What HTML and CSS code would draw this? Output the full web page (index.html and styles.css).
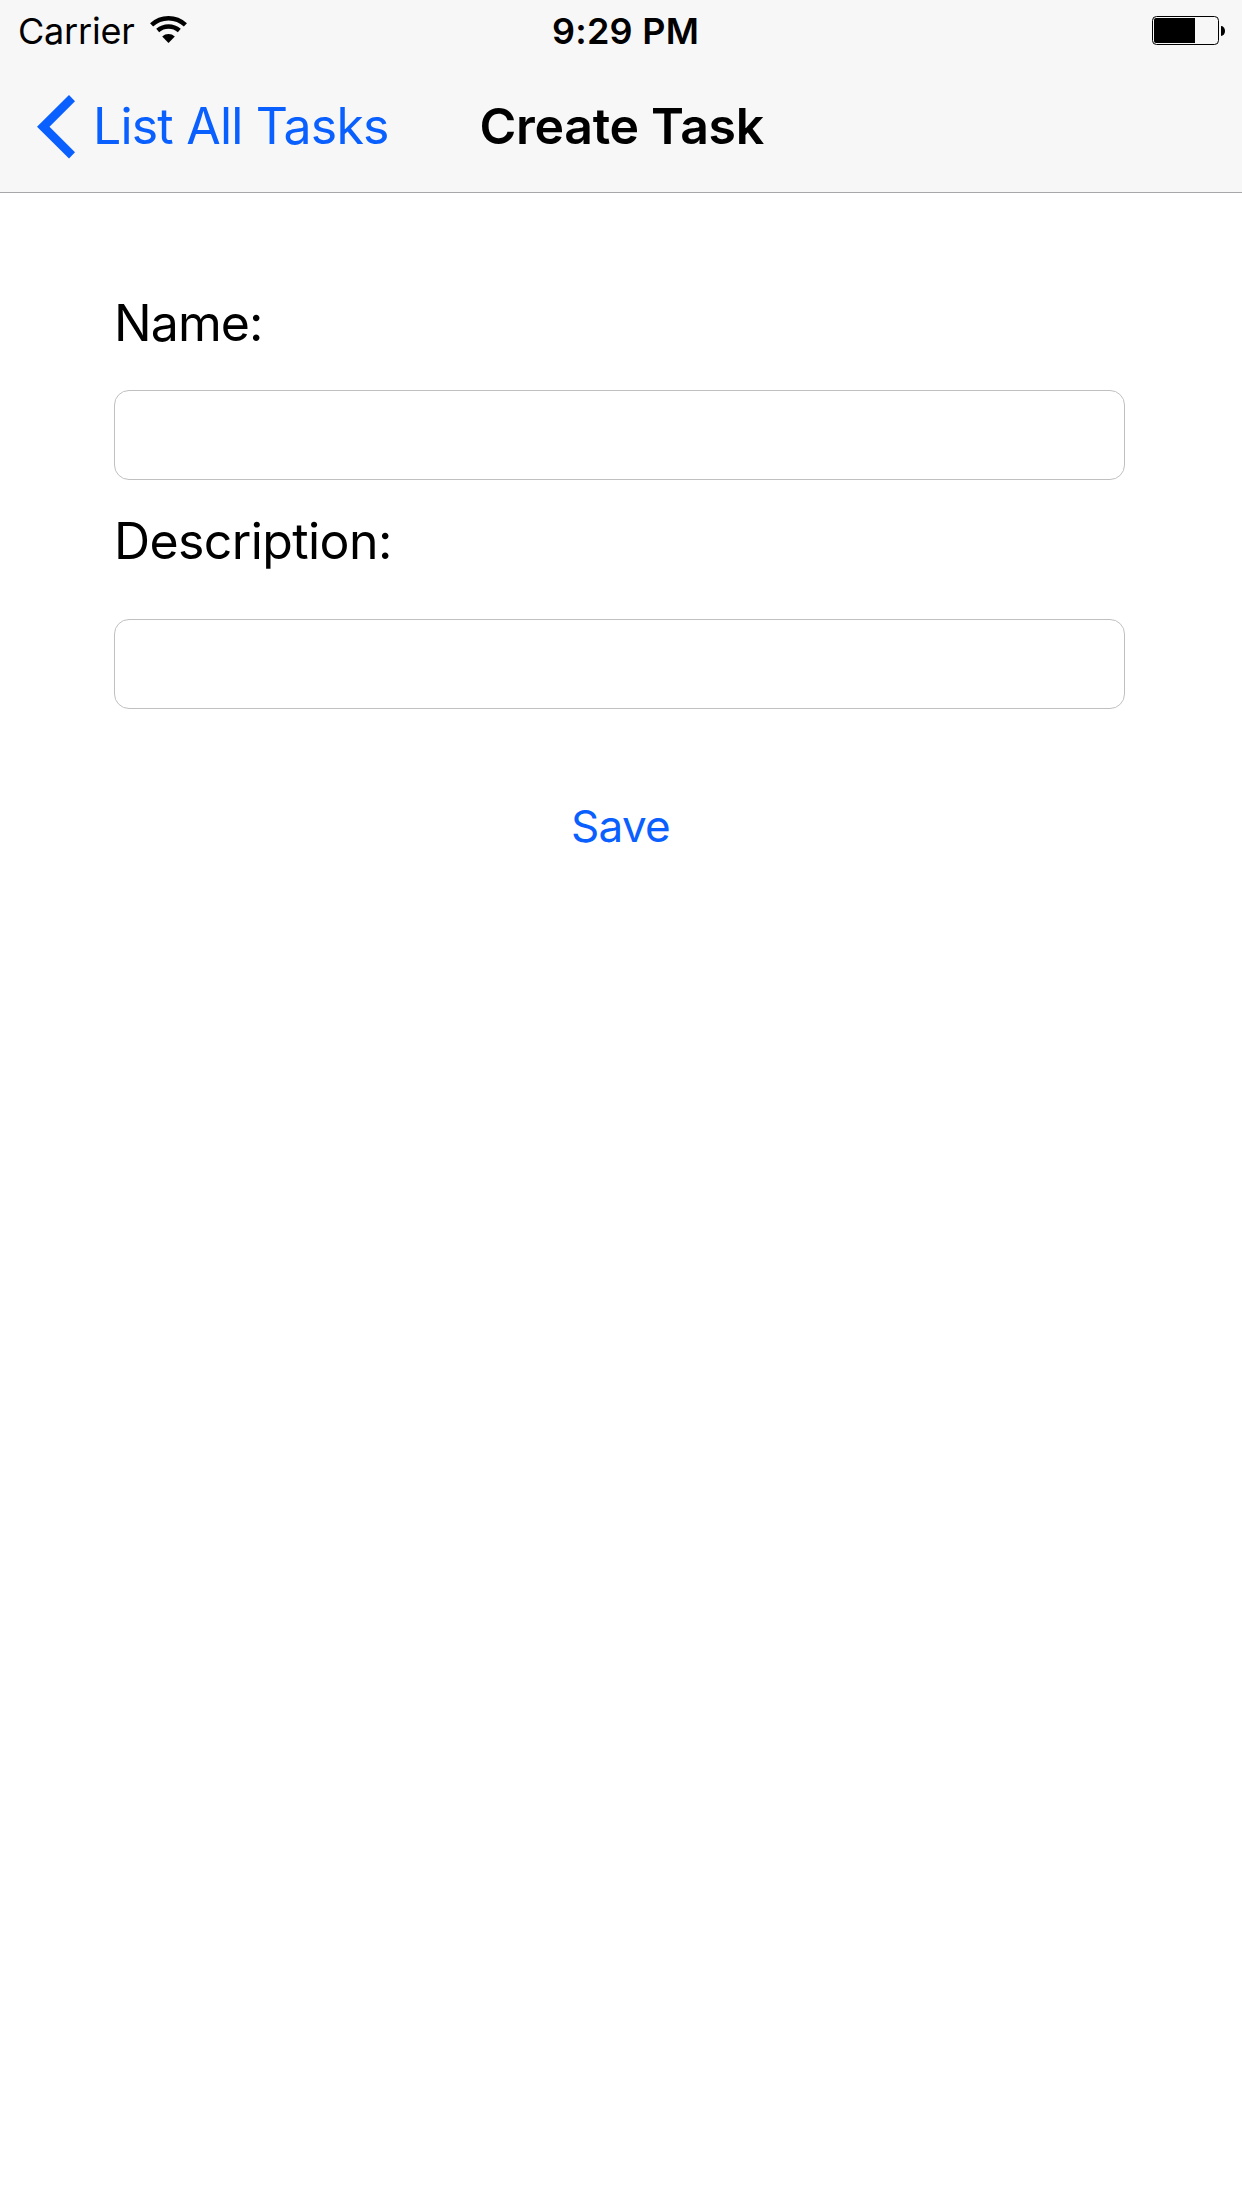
FILE: index.html
```
<!DOCTYPE html>
<html lang="en">
<head>
<meta charset="utf-8">
<title>Create Task</title>
<link rel="stylesheet" href="styles.css">
</head>
<body>
<header class="top">
  <div class="status-bar">
    <div class="status-left">
      <span class="carrier">Carrier</span>
      <svg class="wifi" width="38" height="29" viewBox="0 0 38 29" aria-hidden="true">
        <path d="M1.6 9.9a24.8 24.8 0 0 1 33.8 0" fill="none" stroke="#000" stroke-width="4.5"/>
        <path d="M7.7 15.5a16.6 16.6 0 0 1 21.6 0" fill="none" stroke="#000" stroke-width="4.5"/>
        <path d="M12.2 21.4a9.3 9.3 0 0 1 12.6 0L18.5 28z"/>
      </svg>
    </div>
    <span class="time">9:29 PM</span>
    <svg class="battery" width="74" height="30" viewBox="0 0 74 30" aria-hidden="true">
      <rect x=".5" y=".5" width="66" height="28" rx="4" fill="none" stroke="#000"/>
      <path d="M4 2h39v25H4a2 2 0 0 1-2-2V4a2 2 0 0 1 2-2z"/>
      <path d="M69 10a4 5 0 0 1 0 10z"/>
    </svg>
  </div>
  <nav class="nav-bar">
    <a class="back">
      <svg class="chevron" width="38" height="64" viewBox="0 0 38 64" aria-hidden="true">
        <path d="M32 0l6 6.3L12.5 31.8 38 57.2 32 63.5 0 31.8z" fill="#0a60ff"/>
      </svg>
      <span class="back-label">List All Tasks</span>
    </a>
    <h1 class="title">Create Task</h1>
  </nav>
</header>
<main class="form">
  <label class="label name-label" for="name">Name:</label>
  <input class="field" id="name" type="text">
  <label class="label description-label" for="description">Description:</label>
  <input class="field" id="description" type="text">
  <button class="save" type="button">Save</button>
</main>
</body>
</html>
```
FILE: styles.css
```
* {
  box-sizing: border-box;
}

body {
  margin: 0;
  min-height: 2208px;
  background: #fff;
  color: #000;
  font-family: Inter, "Liberation Sans", sans-serif;
}

.top {
  height: 193px;
  background: #f7f7f7;
  border-bottom: 1px solid #a7a7aa;
}

.status-bar {
  display: grid;
  grid-template-columns: 1fr auto 1fr;
  height: 60px;
  padding: 0 16px 0 18px;
  font-size: 36px;
  line-height: 62px;
}

.status-left {
  display: flex;
}

.carrier {
  width: 132px;
  letter-spacing: -0.2px;
}

.wifi {
  margin-top: 15px;
}

.time {
  margin-left: 7px;
  font-weight: 600;
  letter-spacing: 0.25px;
}

.battery {
  justify-self: end;
  margin-top: 16px;
}

.nav-bar {
  display: grid;
  grid-template-columns: 479.5px 1fr;
  height: 132px;
  padding-top: 35px;
  line-height: 62px;
}

.back {
  display: flex;
  padding-left: 37px;
  color: #0a60ff;
  font-size: 50px;
}

.back-label {
  margin-left: 18px;
  letter-spacing: -0.8px;
  white-space: nowrap;
}

.title {
  margin: 0;
  font-size: 50px;
  font-weight: 600;
  letter-spacing: -0.3px;
}

.form {
  display: flex;
  flex-direction: column;
  padding: 99px 117px 0 114px;
}

.label {
  height: 62px;
  font-size: 50px;
  letter-spacing: -0.6px;
  line-height: 62px;
}

.name-label {
  margin-bottom: 36px;
  letter-spacing: -0.9px;
}

.description-label {
  margin: 30px 0 47px;
}

.field {
  width: 1011px;
  height: 90px;
  padding: 0 21px;
  border: 1px solid #c0c0c0;
  border-radius: 15px;
  background: #fff;
  font: inherit;
  font-size: 42px;
  outline: none;
}

.save {
  align-self: center;
  margin: 86px 0 0 2px;
  padding: 0;
  border: 0;
  background: none;
  color: #0a60ff;
  font-family: inherit;
  font-size: 44px;
  letter-spacing: -0.7px;
  line-height: 62px;
}
```
